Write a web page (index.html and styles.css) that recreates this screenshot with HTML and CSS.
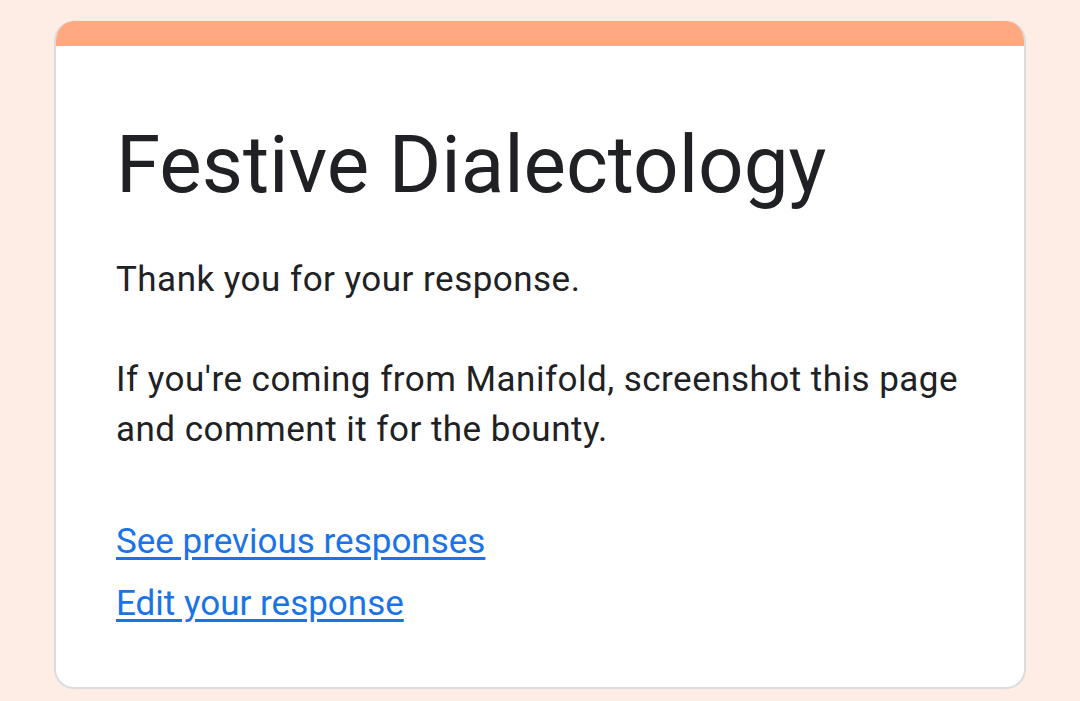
FILE: index.html
```html
<!DOCTYPE html>
<html>
<head>
<meta charset="utf-8">
<link rel="stylesheet" href="styles.css">
</head>
<body>
<div class="card">
  <div class="bar"></div>
  <div class="content">
    <h1 class="title">Festive Dialectology</h1>
    <div class="message">Thank you for your response.<br><br>If you're coming from Manifold, screenshot this page and comment it for the bounty.</div>
    <div class="links">
      <a class="link" href="#">See previous responses</a>
      <a class="link" href="#">Edit your response</a>
    </div>
  </div>
</div>
</body>
</html>
```

FILE: styles.css
```css
html, body {
  margin: 0;
  padding: 0;
  background: #feede5;
  font-family: Roboto, "Liberation Sans", sans-serif;
  color: #202124;
}
.card {
  margin: 21px 0 0 54px;
  width: 972px;
  height: 668px;
  box-sizing: border-box;
  background: #fff;
  border: 2px solid #dadce0;
  border-top: none;
  border-radius: 20px;
  overflow: hidden;
}
.bar {
  height: 25px;
  background: #ffa882;
  margin: 0 -2px;
}
.content {
  padding: 69px 60px 0 60px;
}
.title {
  margin: 0;
  font-size: 80px;
  font-weight: 400;
  line-height: 100px;
  letter-spacing: -0.05px;
}
.message {
  margin-top: 40px;
  font-size: 35px;
  line-height: 50px;
  letter-spacing: 0.48px;
}
.links {
  margin-top: 62px;
  display: flex;
  flex-direction: column;
  align-items: flex-start;
  gap: 12px;
}
.link {
  font-size: 35px;
  line-height: 50px;
  color: #1a73e8;
  text-decoration: underline;
  text-underline-offset: 4px;
}
```
